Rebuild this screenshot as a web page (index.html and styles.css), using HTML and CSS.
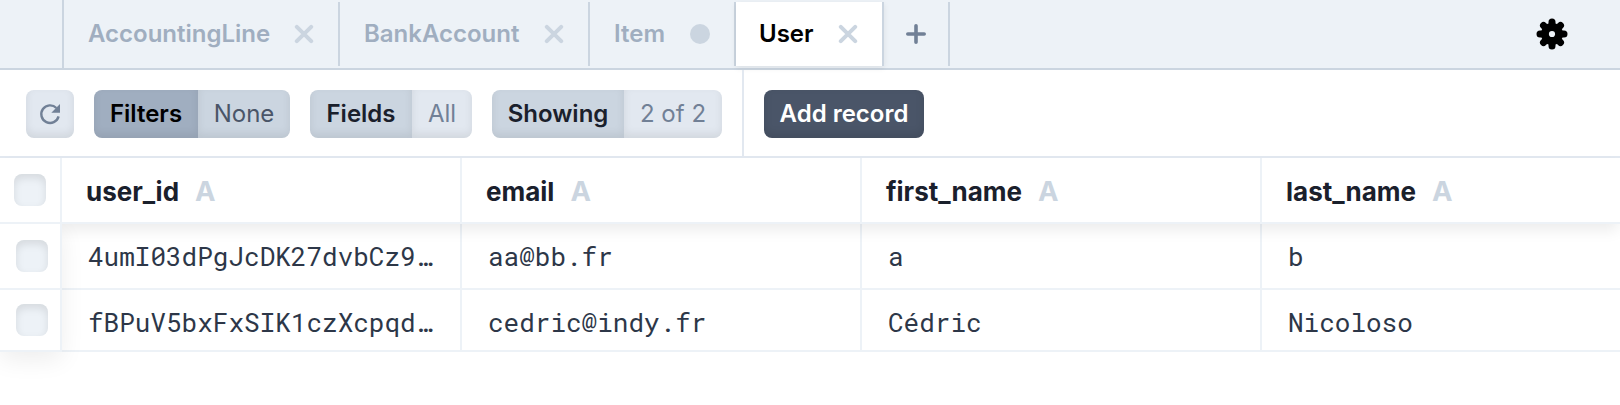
FILE: index.html
```html
<!DOCTYPE html>
<html lang="en">
<head>
<meta charset="utf-8">
<title>User</title>
<link rel="stylesheet" href="styles.css">
</head>
<body>
<nav class="tabs">
  <div class="tabs-lead"></div>
  <div class="tab tab-accounting"><span>AccountingLine</span><svg class="close" viewBox="0 0 20 20"><path d="M2.8 2.8 17.2 17.2M17.2 2.8 2.8 17.2"/></svg></div>
  <div class="tab tab-bank"><span>BankAccount</span><svg class="close" viewBox="0 0 20 20"><path d="M2.8 2.8 17.2 17.2M17.2 2.8 2.8 17.2"/></svg></div>
  <div class="tab tab-item"><span>Item</span><i class="dot"></i></div>
  <div class="tab tab-user active"><span>User</span><svg class="close" viewBox="0 0 20 20"><path d="M2.8 2.8 17.2 17.2M17.2 2.8 2.8 17.2"/></svg></div>
  <div class="tab tab-add"><svg class="plus" viewBox="0 0 20 20"><path d="M10 1.8V18.2M1.8 10H18.2"/></svg></div>
  <svg class="gear" viewBox="-16 -16 32 32">
    <path d="M0-12V12M-12 0H12M-8.5-8.5 8.5 8.5M8.5-8.5-8.5 8.5"/>
    <circle class="gear-body" r="11"/>
    <circle class="gear-hole" r="3.1"/>
  </svg>
</nav>
<section class="toolbar">
  <button class="refresh" aria-label="Refresh"><svg viewBox="0 0 20 20"><path class="arc" d="M18.6 12.4A8.8 8.8 0 1 1 16.4 4"/><path class="head" d="M20 0V8.7H11.3Z"/></svg></button>
  <div class="pill filters"><b>Filters</b><span>None</span></div>
  <div class="pill fields"><b>Fields</b><span>All</span></div>
  <div class="pill showing"><b>Showing</b><span>2 of 2</span></div>
  <div class="divider"></div>
  <button class="add">Add record</button>
</section>
<main class="grid">
  <div class="head-row">
    <div class="check-head"><i class="box"></i></div>
    <div class="th">user_id<em>A</em></div>
    <div class="th">email<em>A</em></div>
    <div class="th">first_name<em>A</em></div>
    <div class="th last">last_name<em>A</em></div>
  </div>
  <div class="body">
    <div class="check-col">
      <div class="check"><i class="box"></i></div>
      <div class="check"><i class="box"></i></div>
    </div>
    <div class="rows">
      <div class="row"><div class="td">4umI03dPgJcDK27dvbCz9…</div><div class="td">aa@bb.fr</div><div class="td">a</div><div class="td last">b</div></div>
      <div class="row"><div class="td">fBPuV5bxFxSIK1czXcpqd…</div><div class="td">cedric@indy.fr</div><div class="td">Cédric</div><div class="td last">Nicoloso</div></div>
    </div>
  </div>
</main>
</body>
</html>
```
FILE: styles.css
```css
* { box-sizing: border-box; }
body { margin: 0; height: 405px; overflow: hidden; background: #fff; font-family: Inter, sans-serif; font-size: 24px; line-height: 36px; color: #1a202c; }
button { border: 0; padding: 0; font: inherit; }

.tabs { display: flex; height: 70px; background: #edf2f7; border-bottom: 2px solid #cbd5e0; }
.tabs-lead { width: 64px; border-right: 2px solid #cbd5e0; }
.tab { display: flex; align-items: center; justify-content: space-between; height: 64px; margin-top: 2px; padding: 0 24px; border-right: 2px solid #cbd5e0; font-weight: 600; color: #a0aec0; }
.tab-accounting { width: 276px; }
.tab-bank { width: 250px; }
.tab-item { width: 146px; }
.tab-user { width: 148px; }
.tab-add { width: 66px; justify-content: center; padding: 0; }
.tab.active { padding-left: 23px; background: #fff; color: #000; box-shadow: 0 2px 6px rgba(0,0,0,.08); }
.close { width: 20px; height: 20px; fill: none; stroke: #cbd5e0; stroke-width: 4; stroke-linecap: round; }
.dot { width: 20px; height: 20px; border-radius: 50%; background: #cbd5e0; }
.plus { width: 20px; height: 20px; fill: none; stroke: #718096; stroke-width: 3.6; stroke-linecap: round; }
.gear { width: 32px; height: 32px; margin: 18px 52px 0 auto; stroke: #000; stroke-width: 7; stroke-linecap: round; }
.gear-body { stroke: none; fill: #000; }
.gear-hole { stroke: none; fill: #edf2f7; }

.toolbar { display: flex; align-items: flex-start; height: 88px; padding-left: 26px; border-bottom: 2px solid #e2e8f0; }
.refresh, .pill, .add { margin-top: 20px; }
.refresh { display: flex; align-items: center; justify-content: center; width: 48px; height: 48px; margin-right: 20px; border-radius: 8px; background: #e2e8f0; box-shadow: inset 0 -4px 8px rgba(0,0,0,.08); }
.refresh svg { width: 20px; height: 20px; overflow: visible; }
.arc { fill: none; stroke: #718096; stroke-width: 2.4; }
.head { fill: #718096; }
.pill { display: flex; height: 48px; margin-right: 20px; border-radius: 8px; overflow: hidden; line-height: 48px; }
.pill b, .pill span { text-align: center; }
.pill b { font-weight: 600; background: #cbd5e0; box-shadow: inset 0 -4px 8px rgba(0,0,0,.08); }
.pill span { flex: 1; color: #718096; background: #e2e8f0; box-shadow: inset 0 -4px 8px rgba(0,0,0,.08); }
.filters { width: 196px; }
.filters b { width: 104px; background: #a0aec0; color: #000; }
.filters span { background: #cbd5e0; color: #4a5568; }
.fields { width: 162px; }
.fields b { width: 102px; }
.showing { width: 230px; }
.showing b { width: 132px; }
.divider { width: 2px; height: 86px; margin-right: 20px; background: #e2e8f0; }
.add { width: 160px; height: 48px; border-radius: 8px; background: #4a5568; color: #fff; font-weight: 600; box-shadow: inset 0 -4px 8px rgba(0,0,0,.1); }

.head-row { position: relative; z-index: 1; display: flex; height: 66px; background: #fff; border-bottom: 2px solid #edf2f7; box-shadow: 0 8px 14px -2px rgba(0,0,0,.08); }
.check-head { flex: none; width: 62px; padding: 16px 0 0 14px; border-right: 2px solid #edf2f7; }
.box { display: block; width: 32px; height: 32px; border-radius: 8px; background: #edf2f7; box-shadow: inset 0 4px 8px rgba(0,0,0,.1); }
.th { flex: none; width: 400px; padding: 2px 24px 0; border-right: 2px solid #edf2f7; font-size: 26px; line-height: 62px; font-weight: 700; }
.th em { margin-left: 16px; font-style: normal; font-size: 27.5px; font-weight: 700; color: #cbd5e0; }
.th.last, .td.last { flex: 1; border-right: 0; }
.body { display: flex; }
.check-col { position: relative; z-index: 2; flex: none; width: 62px; background: #fff; box-shadow: 0 8px 24px rgba(0,0,0,.07); clip-path: inset(0 -40px -40px 0); }
.check { height: 66px; padding: 16px 0 0 16px; border-right: 2px solid #edf2f7; border-bottom: 2px solid #edf2f7; }
.check + .check { height: 62px; padding-top: 14px; }
.rows { flex: 1; }
.row { display: flex; height: 66px; border-bottom: 2px solid #edf2f7; }
.row + .row { height: 62px; }
.td { flex: none; width: 400px; padding: 0 26px; border-right: 2px solid #edf2f7; font-family: "Roboto Mono", "DejaVu Sans Mono", monospace; font-size: 26px; line-height: 64px; color: #2d3748; white-space: nowrap; }
```
